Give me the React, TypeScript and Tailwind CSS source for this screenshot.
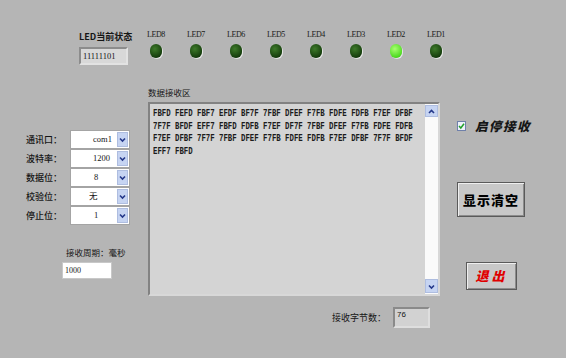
import React from 'react';

const leds = [
  { name: 'LED8', on: false },
  { name: 'LED7', on: false },
  { name: 'LED6', on: false },
  { name: 'LED5', on: false },
  { name: 'LED4', on: false },
  { name: 'LED3', on: false },
  { name: 'LED2', on: true },
  { name: 'LED1', on: false },
];

const settings = [
  { label: '通讯口：', value: 'com1', pad: 'pl-[22px]' },
  { label: '波特率：', value: '1200', pad: 'pl-[22px]' },
  { label: '数据位：', value: '8', pad: 'pl-[23px]' },
  { label: '校验位：', value: '无', pad: 'pl-[18px]' },
  { label: '停止位：', value: '1', pad: 'pl-[23px]' },
];

const lines = [
  'FBFD FEFD FBF7 EFDF BF7F 7FBF DFEF F7FB FDFE FDFB F7EF DFBF',
  '7F7F BFDF EFF7 FBFD FDFB F7EF DF7F 7FBF DFEF F7FB FDFE FDFB',
  'F7EF DFBF 7F7F 7FBF DFEF F7FB FDFE FDFB F7EF DFBF 7F7F BFDF',
  'EFF7 FBFD',
];

function Chevron({ up = false }: { up?: boolean }) {
  return (
    <svg width="9" height="9" viewBox="0 0 9 9">
      <polyline
        points={up ? '2,6 4.5,3.5 7,6' : '2,3.5 4.5,6 7,3.5'}
        fill="none"
        stroke="#24388a"
        strokeWidth="1.6"
      />
    </svg>
  );
}

function Led({ name, on }: { name: string; on: boolean }) {
  return (
    <div className="w-10 flex flex-col items-center">
      <span className="h-[9px] text-[8px] leading-[9px] tracking-[-0.4px] font-['Liberation_Serif',serif] text-[#1a1a1a]">
        {name}
      </span>
      <div
        className={
          on
            ? 'mt-[5px] w-[12px] h-[14px] rounded-full bg-[radial-gradient(circle_at_40%_35%,#a8ff70,#48d81c_75%)] shadow-[1px_1px_0_0_#e4e4e4]'
            : 'mt-[5px] w-[12px] h-[14px] rounded-full bg-[radial-gradient(circle_at_40%_35%,#3e7a2a,#133a0b_75%)] shadow-[1px_1px_0_0_#e4e4e4]'
        }
      />
    </div>
  );
}

export default function App() {
  return (
    <div className="w-[566px] h-[358px] bg-[#b5b5b5] overflow-hidden font-['Noto_Sans_CJK_SC',sans-serif] text-[#151515]">
      {/* top: led status */}
      <div className="flex pt-[30px] h-[65px]">
        <div className="ml-[79px] w-[50px] flex flex-col">
          <div className="h-[14px] leading-[14px] text-[9px] font-bold whitespace-nowrap">LED当前状态</div>
          <div className="mt-[3px] h-[18px] w-[49px] bg-[#d8d8d8] border-2 border-t-[#8c8c8c] border-l-[#8c8c8c] border-b-[#e2e2e2] border-r-[#e2e2e2] pl-[2px] text-[8.5px] leading-[14px] font-['Liberation_Serif',serif]">
            11111101
          </div>
        </div>
        <div className="ml-[7px] flex">
          {leds.map((l) => (
            <Led key={l.name} name={l.name} on={l.on} />
          ))}
        </div>
      </div>

      <div className="flex items-start">
        {/* serial settings */}
        <div className="w-[148px] pt-[65px]">
          {settings.map((s) => (
            <div key={s.label} className="flex items-center h-[19px]">
              <span className="pl-[26px] w-[70px] text-[9px] font-medium whitespace-nowrap">{s.label}</span>
              <div className="w-[60px] h-[19px] bg-white border border-[#a4a4a4] flex items-center">
                <span className={`flex-1 ${s.pad} text-[8.5px] font-['Liberation_Serif','Noto_Sans_CJK_SC',serif]`}>{s.value}</span>
                <div className="w-[11px] h-[15px] mr-[1px] bg-[#c6d4f2] border border-[#aebde0] flex items-center justify-center">
                  <Chevron />
                </div>
              </div>
            </div>
          ))}
          <div className="mt-[20px] pl-[66px] h-[14px] leading-[14px] text-[8.5px] whitespace-nowrap">接收周期：毫秒</div>
          <div className="ml-[62px] mt-[3px] w-[50px] h-[17px] bg-white border border-[#c8c8c8] pl-[2px] text-[8px] leading-[15px] font-['Liberation_Serif',serif]">
            1000
          </div>
        </div>

        {/* receive area */}
        <div className="w-[292px] pt-[17px]">
          <div className="h-[20px] leading-[20px] text-[8.5px]">数据接收区</div>
          <div className="h-[194px] flex border-2 border-t-[#828282] border-l-[#828282] border-b-[#d8d8d8] border-r-[#d8d8d8]">
            <div className="flex-1 bg-[#d4d4d4] pt-[3px] pl-[3px] overflow-hidden">
              <div className="origin-top-left scale-x-[0.667] font-['Liberation_Mono',monospace] font-bold text-[11px] leading-[12.5px] text-[#1c1c1c]">
                {lines.map((ln, i) => (
                  <div key={i} className="whitespace-pre">{ln}</div>
                ))}
              </div>
            </div>
            <div className="w-[13px] bg-[#fafafa] flex flex-col justify-between py-[1px]">
              <div className="h-[12px] bg-[#c6d4f2] border border-[#aebde0] flex items-center justify-center">
                <Chevron up />
              </div>
              <div className="h-[14px] bg-[#c6d4f2] border border-[#aebde0] flex items-center justify-center">
                <Chevron />
              </div>
            </div>
          </div>
          <div className="mt-[11px] flex items-center justify-end pr-[10px]">
            <span className="mr-[7px] text-[9px] whitespace-nowrap">接收字节数：</span>
            <div className="w-[37px] h-[21px] bg-[#d2d2d2] border-2 border-t-[#8a8a8a] border-l-[#8a8a8a] border-b-[#dedede] border-r-[#dedede] pl-[2px] text-[8px] leading-[12px] font-['Liberation_Sans',sans-serif]">
              76
            </div>
          </div>
        </div>

        {/* controls */}
        <div className="pl-[17px] pt-[53px]">
          <div className="flex items-center h-[16px]">
            <svg width="9" height="10" viewBox="0 0 9 10">
              <rect x="0.5" y="0.5" width="8" height="9" fill="#eef2fa" stroke="#6f80aa" />
              <polyline points="2,5 3.8,7 7,2.8" fill="none" stroke="#21a12a" strokeWidth="1.5" />
            </svg>
            <span className="ml-[9px] text-[12.5px] font-black italic tracking-[1.5px] whitespace-nowrap">启停接收</span>
          </div>
          <button className="mt-[48px] w-[68px] h-[35px] bg-[#c8c8c8] border border-[#5a5a5a] shadow-[inset_1px_1px_0_#efefef,inset_-1px_-1px_0_#8c8c8c] flex items-center justify-center text-[13px] font-black tracking-[1px] text-black">
            显示清空
          </button>
          <button className="mt-[45px] ml-[9px] w-[51px] h-[28px] bg-[#c8c8c8] border border-[#5a5a5a] shadow-[inset_1px_1px_0_#efefef,inset_-1px_-1px_0_#8c8c8c] flex items-center justify-center text-[13px] font-black italic tracking-[3px] text-[#e00000]">
            退出
          </button>
        </div>
      </div>
    </div>
  );
}
